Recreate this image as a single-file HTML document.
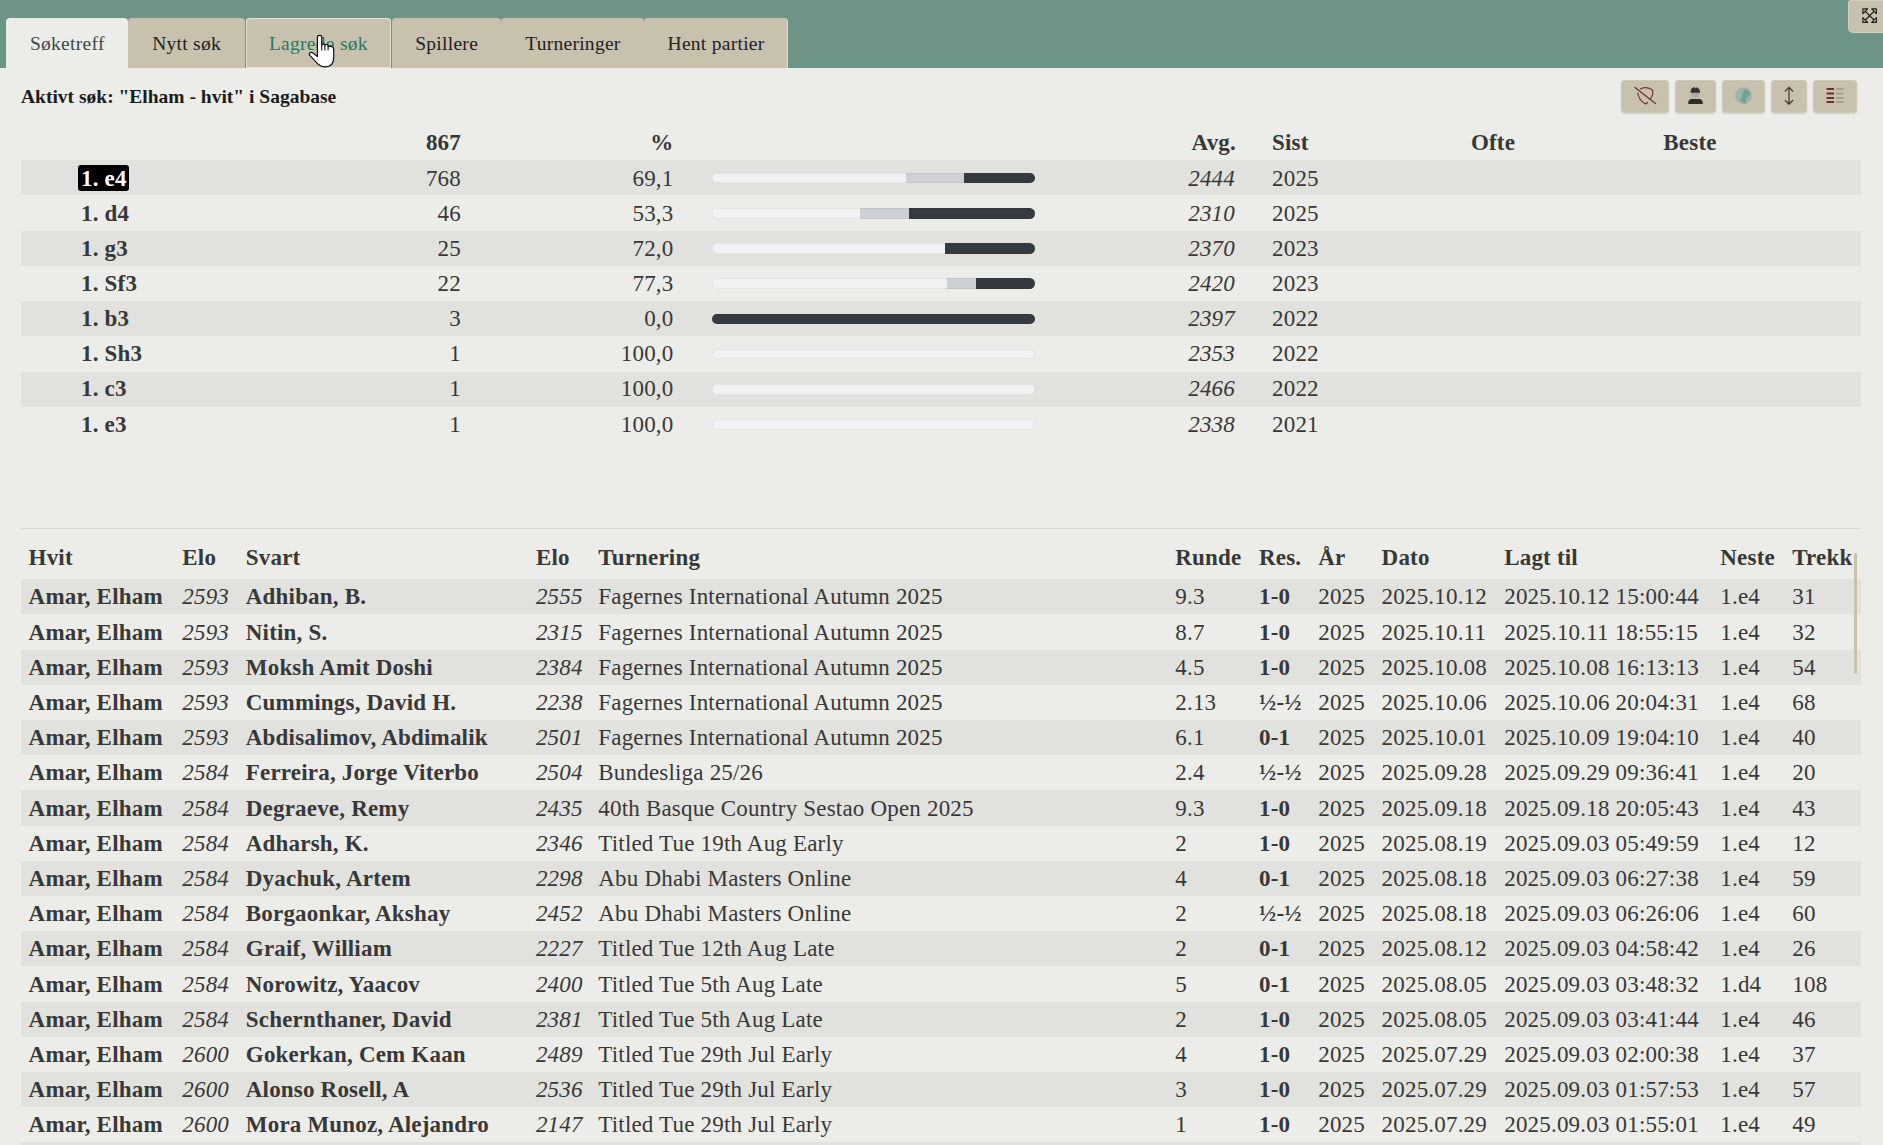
<!DOCTYPE html>
<html><head><meta charset="utf-8"><style>
html,body{margin:0;padding:0;}
body{width:1883px;height:1145px;overflow:hidden;position:relative;background:#ecece8;font-family:"Liberation Serif",serif;color:#383838;}
.t{position:absolute;white-space:nowrap;}
.ls{letter-spacing:0.19px;}
.r{position:absolute;}
.bar{border-radius:6px;box-shadow:inset 0 0 0 0.7px rgba(0,0,0,0.07);}
</style></head><body>
<div class="r" style="left:0px;top:0px;width:1883px;height:68px;background:#6e9487;"></div>
<div class="r" style="left:6px;top:18px;width:122px;height:50px;background:#ecece8;border-radius:4px 4px 0 0;"></div>
<div class="t" style="top:33.67px;left:-132.70px;width:400px;text-align:center;font-size:19.5px;line-height:19.5px;color:#3b4a4a;letter-spacing:0.28px;">Søketreff</div>
<div class="r" style="left:128px;top:18px;width:116.5px;height:50px;background:#c8c1ae;border-radius:4px 4px 0 0;"></div>
<div class="t" style="top:33.67px;left:-13.45px;width:400px;text-align:center;font-size:19.5px;line-height:19.5px;color:#222;letter-spacing:0.28px;">Nytt søk</div>
<div class="r" style="left:245.5px;top:18px;width:145.2px;height:50px;background:#c8c1ae;border-radius:4px 4px 0 0;box-shadow: inset 0 0 0 1px #e6e2d6;"></div>
<div class="t" style="top:33.67px;left:118.40px;width:400px;text-align:center;font-size:19.5px;line-height:19.5px;color:#2a7862;letter-spacing:0.28px;">Lagrede søk</div>
<div class="r" style="left:391.5px;top:18px;width:109.7px;height:50px;background:#c8c1ae;border-radius:4px 4px 0 0;"></div>
<div class="t" style="top:33.67px;left:246.65px;width:400px;text-align:center;font-size:19.5px;line-height:19.5px;color:#222;letter-spacing:0.28px;">Spillere</div>
<div class="r" style="left:501.2px;top:18px;width:142.8px;height:50px;background:#c8c1ae;border-radius:4px 4px 0 0;"></div>
<div class="t" style="top:33.67px;left:372.90px;width:400px;text-align:center;font-size:19.5px;line-height:19.5px;color:#222;letter-spacing:0.28px;">Turneringer</div>
<div class="r" style="left:644px;top:18px;width:143.5px;height:50px;background:#c8c1ae;border-radius:4px 4px 0 0;box-shadow: inset -1px 0 0 rgba(235,238,228,0.55);"></div>
<div class="t" style="top:33.67px;left:516.05px;width:400px;text-align:center;font-size:19.5px;line-height:19.5px;color:#222;letter-spacing:0.28px;">Hent partier</div>
<div class="r" style="left:1848px;top:0px;width:40px;height:33px;background:#c8c1ae;border-radius:3px 0 0 5px;box-shadow:inset 0 0 0 1px rgba(255,255,255,0.22);"></div>
<svg class="r" style="left:1855px;top:0px" width="28" height="30" viewBox="1855 0 28 30" fill="none" stroke="#1e1a18" stroke-width="1.15" stroke-linejoin="round">
<path d="M1862.9,8.9 H1867.6 L1862.9,13.6 Z M1876.4,8.9 H1871.7 L1876.4,13.6 Z M1862.9,22.4 H1867.6 L1862.9,17.7 Z M1876.4,22.4 H1871.7 L1876.4,17.7 Z"/>
<path d="M1865.3,11.3 L1874,20 M1874,11.3 L1865.3,20" stroke-width="1.15"/></svg>
<div class="t" style="top:86.77px;left:21.00px;font-size:19.5px;line-height:19.5px;font-weight:bold;color:#1c1c1c;">Aktivt søk: "Elham - hvit" i Sagabase</div>
<div class="r" style="left:1621px;top:80px;width:48px;height:33px;background:#c8c1ae;border-radius:4px;box-shadow:0 1px 2px rgba(0,0,0,0.12), inset 0 0 0 1px rgba(255,255,255,0.12);"></div>
<div class="r" style="left:1675px;top:80px;width:41px;height:33px;background:#c8c1ae;border-radius:4px;box-shadow:0 1px 2px rgba(0,0,0,0.12), inset 0 0 0 1px rgba(255,255,255,0.12);"></div>
<div class="r" style="left:1722px;top:80px;width:43px;height:33px;background:#c8c1ae;border-radius:4px;box-shadow:0 1px 2px rgba(0,0,0,0.12), inset 0 0 0 1px rgba(255,255,255,0.12);"></div>
<div class="r" style="left:1771px;top:80px;width:36px;height:33px;background:#c8c1ae;border-radius:4px;box-shadow:0 1px 2px rgba(0,0,0,0.12), inset 0 0 0 1px rgba(255,255,255,0.12);"></div>
<div class="r" style="left:1813px;top:80px;width:44px;height:33px;background:#c8c1ae;border-radius:4px;box-shadow:0 1px 2px rgba(0,0,0,0.12), inset 0 0 0 1px rgba(255,255,255,0.12);"></div>
<svg class="r" style="left:0;top:0" width="1883" height="130" viewBox="0 0 1883 130">
<path d="M1637.8,93 Q1640,89 1645,87.6 Q1650,87.6 1652.8,90.5 Q1653.5,98 1645.5,104 Q1638.5,100 1637.8,93 Z" fill="#d9b8ae" fill-opacity="0.55" stroke="none"/>
<path d="M1640.5,89 Q1642.5,87.6 1645,87.6 Q1650,87.6 1652.8,90.5 Q1653.3,95 1650.5,99 M1647.5,102.5 Q1646.5,103.5 1645.5,104 Q1638.5,100 1637.8,93" fill="none" stroke="#6e3a30" stroke-width="1.2" stroke-linecap="round"/>
<path d="M1635,87.5 L1655.5,103.5" stroke="#6e3a30" stroke-width="1.35" stroke-linecap="round"/>
<ellipse cx="1695.2" cy="94.4" rx="3.9" ry="3.3" fill="#aaaaae"/>
<path d="M1690.5,92.8 Q1690.5,88.6 1693,87.5 L1694.3,87 L1695.4,88.6 L1696.6,87.2 Q1700.1,88.4 1700.1,92.8 Z" fill="#3a302c"/>
<path d="M1688.1,104 L1688.6,101 Q1689.2,99 1691.5,99 L1699.5,99 Q1701.8,99 1702.4,101 L1702.9,104 Z" fill="#2e2c28"/>
<circle cx="1743.5" cy="95.6" r="8.3" fill="#9ab6ac"/>
<path d="M1744,89 Q1749,90 1751,94 L1747,97 Q1745,100 1746.5,103.5 Q1741,103 1740,99.5 Q1743,97 1742.5,94 Z" fill="#6f9f93" opacity="0.9"/>
<path d="M1789,88 L1789,103.5 M1785.3,91 L1789,87.3 L1792.7,91 M1785.3,100.5 L1789,104.2 L1792.7,100.5" fill="none" stroke="#4e3c30" stroke-width="1.25" stroke-linecap="round" stroke-linejoin="round"/>
<g stroke-width="2" stroke-linecap="butt">
<path d="M1826.6,89 H1834 M1826.6,93.4 H1834 M1826.6,97.9 H1834 M1826.6,102 H1834" stroke="#6e2f28"/>
<path d="M1836,89 H1843.6 M1836,93.4 H1843.6 M1836,97.9 H1843.6 M1836,102 H1843.6" stroke="#ab9d91"/>
</g>
</svg>
<div class="t ls" style="top:131.24px;left:61.00px;width:400px;text-align:right;font-size:23.0px;line-height:23.0px;font-weight:bold;">867</div>
<div class="t ls" style="top:131.24px;left:273.50px;width:400px;text-align:right;font-size:23.0px;line-height:23.0px;font-weight:bold;">%</div>
<div class="t ls" style="top:131.24px;left:836.00px;width:400px;text-align:right;font-size:23.0px;line-height:23.0px;font-weight:bold;">Avg.</div>
<div class="t ls" style="top:131.24px;left:1272.00px;font-size:23.0px;line-height:23.0px;font-weight:bold;">Sist</div>
<div class="t ls" style="top:131.24px;left:1293.00px;width:400px;text-align:center;font-size:23.0px;line-height:23.0px;font-weight:bold;">Ofte</div>
<div class="t ls" style="top:131.24px;left:1490.00px;width:400px;text-align:center;font-size:23.0px;line-height:23.0px;font-weight:bold;">Beste</div>
<div class="r" style="left:21px;top:160.0px;width:1839.5px;height:35.2px;background:#e1e1dd;"></div>
<div class="r" style="left:78px;top:165.0px;width:51px;height:25.5px;background:#000;border-radius:3px;"></div>
<div class="t ls" style="top:166.54px;left:81.00px;font-size:23.0px;line-height:23.0px;font-weight:bold;color:#fff;">1. e4</div>
<div class="t ls" style="top:166.54px;left:61.00px;width:400px;text-align:right;font-size:23.0px;line-height:23.0px;">768</div>
<div class="t ls" style="top:166.54px;left:273.50px;width:400px;text-align:right;font-size:23.0px;line-height:23.0px;">69,1</div>
<div class="t ls" style="top:166.54px;left:835.00px;width:400px;text-align:right;font-size:23.0px;line-height:23.0px;font-style:italic;">2444</div>
<div class="t ls" style="top:166.54px;left:1272.00px;font-size:23.0px;line-height:23.0px;">2025</div>
<div class="r bar" style="left:711.7px;top:172.80px;width:323.50px;height:10.5px;background:linear-gradient(to right,#f2f2f4 0,#f2f2f4 60.00%,#cdd1d6 60.00%,#cdd1d6 78.00%,#343a40 78.00%,#343a40 100%)"></div>
<div class="t ls" style="top:201.69px;left:81.00px;font-size:23.0px;line-height:23.0px;font-weight:bold;">1. d4</div>
<div class="t ls" style="top:201.69px;left:61.00px;width:400px;text-align:right;font-size:23.0px;line-height:23.0px;">46</div>
<div class="t ls" style="top:201.69px;left:273.50px;width:400px;text-align:right;font-size:23.0px;line-height:23.0px;">53,3</div>
<div class="t ls" style="top:201.69px;left:835.00px;width:400px;text-align:right;font-size:23.0px;line-height:23.0px;font-style:italic;">2310</div>
<div class="t ls" style="top:201.69px;left:1272.00px;font-size:23.0px;line-height:23.0px;">2025</div>
<div class="r bar" style="left:711.7px;top:208.00px;width:323.50px;height:10.5px;background:linear-gradient(to right,#f2f2f4 0,#f2f2f4 45.80%,#cdd1d6 45.80%,#cdd1d6 61.00%,#343a40 61.00%,#343a40 100%)"></div>
<div class="r" style="left:21px;top:230.5px;width:1839.5px;height:35.2px;background:#e1e1dd;"></div>
<div class="t ls" style="top:236.84px;left:81.00px;font-size:23.0px;line-height:23.0px;font-weight:bold;">1. g3</div>
<div class="t ls" style="top:236.84px;left:61.00px;width:400px;text-align:right;font-size:23.0px;line-height:23.0px;">25</div>
<div class="t ls" style="top:236.84px;left:273.50px;width:400px;text-align:right;font-size:23.0px;line-height:23.0px;">72,0</div>
<div class="t ls" style="top:236.84px;left:835.00px;width:400px;text-align:right;font-size:23.0px;line-height:23.0px;font-style:italic;">2370</div>
<div class="t ls" style="top:236.84px;left:1272.00px;font-size:23.0px;line-height:23.0px;">2023</div>
<div class="r bar" style="left:711.7px;top:243.20px;width:323.50px;height:10.5px;background:linear-gradient(to right,#f2f2f4 0,#f2f2f4 72.20%,#cdd1d6 72.20%,#cdd1d6 72.20%,#343a40 72.20%,#343a40 100%)"></div>
<div class="t ls" style="top:271.99px;left:81.00px;font-size:23.0px;line-height:23.0px;font-weight:bold;">1. Sf3</div>
<div class="t ls" style="top:271.99px;left:61.00px;width:400px;text-align:right;font-size:23.0px;line-height:23.0px;">22</div>
<div class="t ls" style="top:271.99px;left:273.50px;width:400px;text-align:right;font-size:23.0px;line-height:23.0px;">77,3</div>
<div class="t ls" style="top:271.99px;left:835.00px;width:400px;text-align:right;font-size:23.0px;line-height:23.0px;font-style:italic;">2420</div>
<div class="t ls" style="top:271.99px;left:1272.00px;font-size:23.0px;line-height:23.0px;">2023</div>
<div class="r bar" style="left:711.7px;top:278.40px;width:323.50px;height:10.5px;background:linear-gradient(to right,#f2f2f4 0,#f2f2f4 72.70%,#cdd1d6 72.70%,#cdd1d6 81.70%,#343a40 81.70%,#343a40 100%)"></div>
<div class="r" style="left:21px;top:301.0px;width:1839.5px;height:35.2px;background:#e1e1dd;"></div>
<div class="t ls" style="top:307.14px;left:81.00px;font-size:23.0px;line-height:23.0px;font-weight:bold;">1. b3</div>
<div class="t ls" style="top:307.14px;left:61.00px;width:400px;text-align:right;font-size:23.0px;line-height:23.0px;">3</div>
<div class="t ls" style="top:307.14px;left:273.50px;width:400px;text-align:right;font-size:23.0px;line-height:23.0px;">0,0</div>
<div class="t ls" style="top:307.14px;left:835.00px;width:400px;text-align:right;font-size:23.0px;line-height:23.0px;font-style:italic;">2397</div>
<div class="t ls" style="top:307.14px;left:1272.00px;font-size:23.0px;line-height:23.0px;">2022</div>
<div class="r bar" style="left:711.7px;top:313.60px;width:323.50px;height:10.5px;background:linear-gradient(to right,#f2f2f4 0,#f2f2f4 0.00%,#cdd1d6 0.00%,#cdd1d6 0.00%,#343a40 0.00%,#343a40 100%)"></div>
<div class="t ls" style="top:342.29px;left:81.00px;font-size:23.0px;line-height:23.0px;font-weight:bold;">1. Sh3</div>
<div class="t ls" style="top:342.29px;left:61.00px;width:400px;text-align:right;font-size:23.0px;line-height:23.0px;">1</div>
<div class="t ls" style="top:342.29px;left:273.50px;width:400px;text-align:right;font-size:23.0px;line-height:23.0px;">100,0</div>
<div class="t ls" style="top:342.29px;left:835.00px;width:400px;text-align:right;font-size:23.0px;line-height:23.0px;font-style:italic;">2353</div>
<div class="t ls" style="top:342.29px;left:1272.00px;font-size:23.0px;line-height:23.0px;">2022</div>
<div class="r bar" style="left:711.7px;top:348.80px;width:323.50px;height:10.5px;background:linear-gradient(to right,#f2f2f4 0,#f2f2f4 100.00%,#cdd1d6 100.00%,#cdd1d6 100.00%,#343a40 100.00%,#343a40 100%)"></div>
<div class="r" style="left:21px;top:371.5px;width:1839.5px;height:35.2px;background:#e1e1dd;"></div>
<div class="t ls" style="top:377.44px;left:81.00px;font-size:23.0px;line-height:23.0px;font-weight:bold;">1. c3</div>
<div class="t ls" style="top:377.44px;left:61.00px;width:400px;text-align:right;font-size:23.0px;line-height:23.0px;">1</div>
<div class="t ls" style="top:377.44px;left:273.50px;width:400px;text-align:right;font-size:23.0px;line-height:23.0px;">100,0</div>
<div class="t ls" style="top:377.44px;left:835.00px;width:400px;text-align:right;font-size:23.0px;line-height:23.0px;font-style:italic;">2466</div>
<div class="t ls" style="top:377.44px;left:1272.00px;font-size:23.0px;line-height:23.0px;">2022</div>
<div class="r bar" style="left:711.7px;top:384.00px;width:323.50px;height:10.5px;background:linear-gradient(to right,#f2f2f4 0,#f2f2f4 100.00%,#cdd1d6 100.00%,#cdd1d6 100.00%,#343a40 100.00%,#343a40 100%)"></div>
<div class="t ls" style="top:412.59px;left:81.00px;font-size:23.0px;line-height:23.0px;font-weight:bold;">1. e3</div>
<div class="t ls" style="top:412.59px;left:61.00px;width:400px;text-align:right;font-size:23.0px;line-height:23.0px;">1</div>
<div class="t ls" style="top:412.59px;left:273.50px;width:400px;text-align:right;font-size:23.0px;line-height:23.0px;">100,0</div>
<div class="t ls" style="top:412.59px;left:835.00px;width:400px;text-align:right;font-size:23.0px;line-height:23.0px;font-style:italic;">2338</div>
<div class="t ls" style="top:412.59px;left:1272.00px;font-size:23.0px;line-height:23.0px;">2021</div>
<div class="r bar" style="left:711.7px;top:419.20px;width:323.50px;height:10.5px;background:linear-gradient(to right,#f2f2f4 0,#f2f2f4 100.00%,#cdd1d6 100.00%,#cdd1d6 100.00%,#343a40 100.00%,#343a40 100%)"></div>
<div class="r" style="left:21px;top:527.5px;width:1839.5px;height:1px;background:#d6d6d2;"></div>
<div class="t ls" style="top:545.74px;left:28.60px;font-size:23.0px;line-height:23.0px;font-weight:bold;">Hvit</div>
<div class="t ls" style="top:545.74px;left:182.30px;font-size:23.0px;line-height:23.0px;font-weight:bold;">Elo</div>
<div class="t ls" style="top:545.74px;left:245.80px;font-size:23.0px;line-height:23.0px;font-weight:bold;">Svart</div>
<div class="t ls" style="top:545.74px;left:535.90px;font-size:23.0px;line-height:23.0px;font-weight:bold;">Elo</div>
<div class="t ls" style="top:545.74px;left:598.30px;font-size:23.0px;line-height:23.0px;font-weight:bold;">Turnering</div>
<div class="t ls" style="top:545.74px;left:1175.30px;font-size:23.0px;line-height:23.0px;font-weight:bold;">Runde</div>
<div class="t ls" style="top:545.74px;left:1259.00px;font-size:23.0px;line-height:23.0px;font-weight:bold;">Res.</div>
<div class="t ls" style="top:545.74px;left:1318.20px;font-size:23.0px;line-height:23.0px;font-weight:bold;">År</div>
<div class="t ls" style="top:545.74px;left:1381.60px;font-size:23.0px;line-height:23.0px;font-weight:bold;">Dato</div>
<div class="t ls" style="top:545.74px;left:1504.20px;font-size:23.0px;line-height:23.0px;font-weight:bold;">Lagt til</div>
<div class="t ls" style="top:545.74px;left:1720.30px;font-size:23.0px;line-height:23.0px;font-weight:bold;">Neste</div>
<div class="t ls" style="top:545.74px;left:1792.30px;font-size:23.0px;line-height:23.0px;font-weight:bold;">Trekk</div>
<div class="r" style="left:21px;top:579.3px;width:1839.5px;height:35.2px;background:#e1e1dd;"></div>
<div class="t ls" style="top:584.54px;left:28.60px;font-size:23.0px;line-height:23.0px;font-weight:bold;">Amar, Elham</div>
<div class="t ls" style="top:584.54px;left:182.30px;font-size:23.0px;line-height:23.0px;font-style:italic;">2593</div>
<div class="t ls" style="top:584.54px;left:245.80px;font-size:23.0px;line-height:23.0px;font-weight:bold;">Adhiban, B.</div>
<div class="t ls" style="top:584.54px;left:535.90px;font-size:23.0px;line-height:23.0px;font-style:italic;">2555</div>
<div class="t ls" style="top:584.54px;left:598.30px;font-size:23.0px;line-height:23.0px;">Fagernes International Autumn 2025</div>
<div class="t ls" style="top:584.54px;left:1175.30px;font-size:23.0px;line-height:23.0px;">9.3</div>
<div class="t ls" style="top:584.54px;left:1259.00px;font-size:23.0px;line-height:23.0px;font-weight:bold;">1-0</div>
<div class="t ls" style="top:584.54px;left:1318.20px;font-size:23.0px;line-height:23.0px;">2025</div>
<div class="t ls" style="top:584.54px;left:1381.60px;font-size:23.0px;line-height:23.0px;">2025.10.12</div>
<div class="t ls" style="top:584.54px;left:1504.20px;font-size:23.0px;line-height:23.0px;">2025.10.12 15:00:44</div>
<div class="t ls" style="top:584.54px;left:1720.30px;font-size:23.0px;line-height:23.0px;">1.e4</div>
<div class="t ls" style="top:584.54px;left:1792.30px;font-size:23.0px;line-height:23.0px;">31</div>
<div class="t ls" style="top:620.69px;left:28.60px;font-size:23.0px;line-height:23.0px;font-weight:bold;">Amar, Elham</div>
<div class="t ls" style="top:620.69px;left:182.30px;font-size:23.0px;line-height:23.0px;font-style:italic;">2593</div>
<div class="t ls" style="top:620.69px;left:245.80px;font-size:23.0px;line-height:23.0px;font-weight:bold;">Nitin, S.</div>
<div class="t ls" style="top:620.69px;left:535.90px;font-size:23.0px;line-height:23.0px;font-style:italic;">2315</div>
<div class="t ls" style="top:620.69px;left:598.30px;font-size:23.0px;line-height:23.0px;">Fagernes International Autumn 2025</div>
<div class="t ls" style="top:620.69px;left:1175.30px;font-size:23.0px;line-height:23.0px;">8.7</div>
<div class="t ls" style="top:620.69px;left:1259.00px;font-size:23.0px;line-height:23.0px;font-weight:bold;">1-0</div>
<div class="t ls" style="top:620.69px;left:1318.20px;font-size:23.0px;line-height:23.0px;">2025</div>
<div class="t ls" style="top:620.69px;left:1381.60px;font-size:23.0px;line-height:23.0px;">2025.10.11</div>
<div class="t ls" style="top:620.69px;left:1504.20px;font-size:23.0px;line-height:23.0px;">2025.10.11 18:55:15</div>
<div class="t ls" style="top:620.69px;left:1720.30px;font-size:23.0px;line-height:23.0px;">1.e4</div>
<div class="t ls" style="top:620.69px;left:1792.30px;font-size:23.0px;line-height:23.0px;">32</div>
<div class="r" style="left:21px;top:649.68px;width:1839.5px;height:35.2px;background:#e1e1dd;"></div>
<div class="t ls" style="top:655.89px;left:28.60px;font-size:23.0px;line-height:23.0px;font-weight:bold;">Amar, Elham</div>
<div class="t ls" style="top:655.89px;left:182.30px;font-size:23.0px;line-height:23.0px;font-style:italic;">2593</div>
<div class="t ls" style="top:655.89px;left:245.80px;font-size:23.0px;line-height:23.0px;font-weight:bold;">Moksh Amit Doshi</div>
<div class="t ls" style="top:655.89px;left:535.90px;font-size:23.0px;line-height:23.0px;font-style:italic;">2384</div>
<div class="t ls" style="top:655.89px;left:598.30px;font-size:23.0px;line-height:23.0px;">Fagernes International Autumn 2025</div>
<div class="t ls" style="top:655.89px;left:1175.30px;font-size:23.0px;line-height:23.0px;">4.5</div>
<div class="t ls" style="top:655.89px;left:1259.00px;font-size:23.0px;line-height:23.0px;font-weight:bold;">1-0</div>
<div class="t ls" style="top:655.89px;left:1318.20px;font-size:23.0px;line-height:23.0px;">2025</div>
<div class="t ls" style="top:655.89px;left:1381.60px;font-size:23.0px;line-height:23.0px;">2025.10.08</div>
<div class="t ls" style="top:655.89px;left:1504.20px;font-size:23.0px;line-height:23.0px;">2025.10.08 16:13:13</div>
<div class="t ls" style="top:655.89px;left:1720.30px;font-size:23.0px;line-height:23.0px;">1.e4</div>
<div class="t ls" style="top:655.89px;left:1792.30px;font-size:23.0px;line-height:23.0px;">54</div>
<div class="t ls" style="top:691.09px;left:28.60px;font-size:23.0px;line-height:23.0px;font-weight:bold;">Amar, Elham</div>
<div class="t ls" style="top:691.09px;left:182.30px;font-size:23.0px;line-height:23.0px;font-style:italic;">2593</div>
<div class="t ls" style="top:691.09px;left:245.80px;font-size:23.0px;line-height:23.0px;font-weight:bold;">Cummings, David H.</div>
<div class="t ls" style="top:691.09px;left:535.90px;font-size:23.0px;line-height:23.0px;font-style:italic;">2238</div>
<div class="t ls" style="top:691.09px;left:598.30px;font-size:23.0px;line-height:23.0px;">Fagernes International Autumn 2025</div>
<div class="t ls" style="top:691.09px;left:1175.30px;font-size:23.0px;line-height:23.0px;">2.13</div>
<div class="t ls" style="top:691.09px;left:1259.00px;font-size:23.0px;line-height:23.0px;font-weight:bold;">½-½</div>
<div class="t ls" style="top:691.09px;left:1318.20px;font-size:23.0px;line-height:23.0px;">2025</div>
<div class="t ls" style="top:691.09px;left:1381.60px;font-size:23.0px;line-height:23.0px;">2025.10.06</div>
<div class="t ls" style="top:691.09px;left:1504.20px;font-size:23.0px;line-height:23.0px;">2025.10.06 20:04:31</div>
<div class="t ls" style="top:691.09px;left:1720.30px;font-size:23.0px;line-height:23.0px;">1.e4</div>
<div class="t ls" style="top:691.09px;left:1792.30px;font-size:23.0px;line-height:23.0px;">68</div>
<div class="r" style="left:21px;top:720.06px;width:1839.5px;height:35.2px;background:#e1e1dd;"></div>
<div class="t ls" style="top:726.29px;left:28.60px;font-size:23.0px;line-height:23.0px;font-weight:bold;">Amar, Elham</div>
<div class="t ls" style="top:726.29px;left:182.30px;font-size:23.0px;line-height:23.0px;font-style:italic;">2593</div>
<div class="t ls" style="top:726.29px;left:245.80px;font-size:23.0px;line-height:23.0px;font-weight:bold;">Abdisalimov, Abdimalik</div>
<div class="t ls" style="top:726.29px;left:535.90px;font-size:23.0px;line-height:23.0px;font-style:italic;">2501</div>
<div class="t ls" style="top:726.29px;left:598.30px;font-size:23.0px;line-height:23.0px;">Fagernes International Autumn 2025</div>
<div class="t ls" style="top:726.29px;left:1175.30px;font-size:23.0px;line-height:23.0px;">6.1</div>
<div class="t ls" style="top:726.29px;left:1259.00px;font-size:23.0px;line-height:23.0px;font-weight:bold;">0-1</div>
<div class="t ls" style="top:726.29px;left:1318.20px;font-size:23.0px;line-height:23.0px;">2025</div>
<div class="t ls" style="top:726.29px;left:1381.60px;font-size:23.0px;line-height:23.0px;">2025.10.01</div>
<div class="t ls" style="top:726.29px;left:1504.20px;font-size:23.0px;line-height:23.0px;">2025.10.09 19:04:10</div>
<div class="t ls" style="top:726.29px;left:1720.30px;font-size:23.0px;line-height:23.0px;">1.e4</div>
<div class="t ls" style="top:726.29px;left:1792.30px;font-size:23.0px;line-height:23.0px;">40</div>
<div class="t ls" style="top:761.49px;left:28.60px;font-size:23.0px;line-height:23.0px;font-weight:bold;">Amar, Elham</div>
<div class="t ls" style="top:761.49px;left:182.30px;font-size:23.0px;line-height:23.0px;font-style:italic;">2584</div>
<div class="t ls" style="top:761.49px;left:245.80px;font-size:23.0px;line-height:23.0px;font-weight:bold;">Ferreira, Jorge Viterbo</div>
<div class="t ls" style="top:761.49px;left:535.90px;font-size:23.0px;line-height:23.0px;font-style:italic;">2504</div>
<div class="t ls" style="top:761.49px;left:598.30px;font-size:23.0px;line-height:23.0px;">Bundesliga 25/26</div>
<div class="t ls" style="top:761.49px;left:1175.30px;font-size:23.0px;line-height:23.0px;">2.4</div>
<div class="t ls" style="top:761.49px;left:1259.00px;font-size:23.0px;line-height:23.0px;font-weight:bold;">½-½</div>
<div class="t ls" style="top:761.49px;left:1318.20px;font-size:23.0px;line-height:23.0px;">2025</div>
<div class="t ls" style="top:761.49px;left:1381.60px;font-size:23.0px;line-height:23.0px;">2025.09.28</div>
<div class="t ls" style="top:761.49px;left:1504.20px;font-size:23.0px;line-height:23.0px;">2025.09.29 09:36:41</div>
<div class="t ls" style="top:761.49px;left:1720.30px;font-size:23.0px;line-height:23.0px;">1.e4</div>
<div class="t ls" style="top:761.49px;left:1792.30px;font-size:23.0px;line-height:23.0px;">20</div>
<div class="r" style="left:21px;top:790.44px;width:1839.5px;height:35.2px;background:#e1e1dd;"></div>
<div class="t ls" style="top:796.69px;left:28.60px;font-size:23.0px;line-height:23.0px;font-weight:bold;">Amar, Elham</div>
<div class="t ls" style="top:796.69px;left:182.30px;font-size:23.0px;line-height:23.0px;font-style:italic;">2584</div>
<div class="t ls" style="top:796.69px;left:245.80px;font-size:23.0px;line-height:23.0px;font-weight:bold;">Degraeve, Remy</div>
<div class="t ls" style="top:796.69px;left:535.90px;font-size:23.0px;line-height:23.0px;font-style:italic;">2435</div>
<div class="t ls" style="top:796.69px;left:598.30px;font-size:23.0px;line-height:23.0px;">40th Basque Country Sestao Open 2025</div>
<div class="t ls" style="top:796.69px;left:1175.30px;font-size:23.0px;line-height:23.0px;">9.3</div>
<div class="t ls" style="top:796.69px;left:1259.00px;font-size:23.0px;line-height:23.0px;font-weight:bold;">1-0</div>
<div class="t ls" style="top:796.69px;left:1318.20px;font-size:23.0px;line-height:23.0px;">2025</div>
<div class="t ls" style="top:796.69px;left:1381.60px;font-size:23.0px;line-height:23.0px;">2025.09.18</div>
<div class="t ls" style="top:796.69px;left:1504.20px;font-size:23.0px;line-height:23.0px;">2025.09.18 20:05:43</div>
<div class="t ls" style="top:796.69px;left:1720.30px;font-size:23.0px;line-height:23.0px;">1.e4</div>
<div class="t ls" style="top:796.69px;left:1792.30px;font-size:23.0px;line-height:23.0px;">43</div>
<div class="t ls" style="top:831.89px;left:28.60px;font-size:23.0px;line-height:23.0px;font-weight:bold;">Amar, Elham</div>
<div class="t ls" style="top:831.89px;left:182.30px;font-size:23.0px;line-height:23.0px;font-style:italic;">2584</div>
<div class="t ls" style="top:831.89px;left:245.80px;font-size:23.0px;line-height:23.0px;font-weight:bold;">Adharsh, K.</div>
<div class="t ls" style="top:831.89px;left:535.90px;font-size:23.0px;line-height:23.0px;font-style:italic;">2346</div>
<div class="t ls" style="top:831.89px;left:598.30px;font-size:23.0px;line-height:23.0px;">Titled Tue 19th Aug Early</div>
<div class="t ls" style="top:831.89px;left:1175.30px;font-size:23.0px;line-height:23.0px;">2</div>
<div class="t ls" style="top:831.89px;left:1259.00px;font-size:23.0px;line-height:23.0px;font-weight:bold;">1-0</div>
<div class="t ls" style="top:831.89px;left:1318.20px;font-size:23.0px;line-height:23.0px;">2025</div>
<div class="t ls" style="top:831.89px;left:1381.60px;font-size:23.0px;line-height:23.0px;">2025.08.19</div>
<div class="t ls" style="top:831.89px;left:1504.20px;font-size:23.0px;line-height:23.0px;">2025.09.03 05:49:59</div>
<div class="t ls" style="top:831.89px;left:1720.30px;font-size:23.0px;line-height:23.0px;">1.e4</div>
<div class="t ls" style="top:831.89px;left:1792.30px;font-size:23.0px;line-height:23.0px;">12</div>
<div class="r" style="left:21px;top:860.82px;width:1839.5px;height:35.2px;background:#e1e1dd;"></div>
<div class="t ls" style="top:867.09px;left:28.60px;font-size:23.0px;line-height:23.0px;font-weight:bold;">Amar, Elham</div>
<div class="t ls" style="top:867.09px;left:182.30px;font-size:23.0px;line-height:23.0px;font-style:italic;">2584</div>
<div class="t ls" style="top:867.09px;left:245.80px;font-size:23.0px;line-height:23.0px;font-weight:bold;">Dyachuk, Artem</div>
<div class="t ls" style="top:867.09px;left:535.90px;font-size:23.0px;line-height:23.0px;font-style:italic;">2298</div>
<div class="t ls" style="top:867.09px;left:598.30px;font-size:23.0px;line-height:23.0px;">Abu Dhabi Masters Online</div>
<div class="t ls" style="top:867.09px;left:1175.30px;font-size:23.0px;line-height:23.0px;">4</div>
<div class="t ls" style="top:867.09px;left:1259.00px;font-size:23.0px;line-height:23.0px;font-weight:bold;">0-1</div>
<div class="t ls" style="top:867.09px;left:1318.20px;font-size:23.0px;line-height:23.0px;">2025</div>
<div class="t ls" style="top:867.09px;left:1381.60px;font-size:23.0px;line-height:23.0px;">2025.08.18</div>
<div class="t ls" style="top:867.09px;left:1504.20px;font-size:23.0px;line-height:23.0px;">2025.09.03 06:27:38</div>
<div class="t ls" style="top:867.09px;left:1720.30px;font-size:23.0px;line-height:23.0px;">1.e4</div>
<div class="t ls" style="top:867.09px;left:1792.30px;font-size:23.0px;line-height:23.0px;">59</div>
<div class="t ls" style="top:902.29px;left:28.60px;font-size:23.0px;line-height:23.0px;font-weight:bold;">Amar, Elham</div>
<div class="t ls" style="top:902.29px;left:182.30px;font-size:23.0px;line-height:23.0px;font-style:italic;">2584</div>
<div class="t ls" style="top:902.29px;left:245.80px;font-size:23.0px;line-height:23.0px;font-weight:bold;">Borgaonkar, Akshay</div>
<div class="t ls" style="top:902.29px;left:535.90px;font-size:23.0px;line-height:23.0px;font-style:italic;">2452</div>
<div class="t ls" style="top:902.29px;left:598.30px;font-size:23.0px;line-height:23.0px;">Abu Dhabi Masters Online</div>
<div class="t ls" style="top:902.29px;left:1175.30px;font-size:23.0px;line-height:23.0px;">2</div>
<div class="t ls" style="top:902.29px;left:1259.00px;font-size:23.0px;line-height:23.0px;font-weight:bold;">½-½</div>
<div class="t ls" style="top:902.29px;left:1318.20px;font-size:23.0px;line-height:23.0px;">2025</div>
<div class="t ls" style="top:902.29px;left:1381.60px;font-size:23.0px;line-height:23.0px;">2025.08.18</div>
<div class="t ls" style="top:902.29px;left:1504.20px;font-size:23.0px;line-height:23.0px;">2025.09.03 06:26:06</div>
<div class="t ls" style="top:902.29px;left:1720.30px;font-size:23.0px;line-height:23.0px;">1.e4</div>
<div class="t ls" style="top:902.29px;left:1792.30px;font-size:23.0px;line-height:23.0px;">60</div>
<div class="r" style="left:21px;top:931.2px;width:1839.5px;height:35.2px;background:#e1e1dd;"></div>
<div class="t ls" style="top:937.49px;left:28.60px;font-size:23.0px;line-height:23.0px;font-weight:bold;">Amar, Elham</div>
<div class="t ls" style="top:937.49px;left:182.30px;font-size:23.0px;line-height:23.0px;font-style:italic;">2584</div>
<div class="t ls" style="top:937.49px;left:245.80px;font-size:23.0px;line-height:23.0px;font-weight:bold;">Graif, William</div>
<div class="t ls" style="top:937.49px;left:535.90px;font-size:23.0px;line-height:23.0px;font-style:italic;">2227</div>
<div class="t ls" style="top:937.49px;left:598.30px;font-size:23.0px;line-height:23.0px;">Titled Tue 12th Aug Late</div>
<div class="t ls" style="top:937.49px;left:1175.30px;font-size:23.0px;line-height:23.0px;">2</div>
<div class="t ls" style="top:937.49px;left:1259.00px;font-size:23.0px;line-height:23.0px;font-weight:bold;">0-1</div>
<div class="t ls" style="top:937.49px;left:1318.20px;font-size:23.0px;line-height:23.0px;">2025</div>
<div class="t ls" style="top:937.49px;left:1381.60px;font-size:23.0px;line-height:23.0px;">2025.08.12</div>
<div class="t ls" style="top:937.49px;left:1504.20px;font-size:23.0px;line-height:23.0px;">2025.09.03 04:58:42</div>
<div class="t ls" style="top:937.49px;left:1720.30px;font-size:23.0px;line-height:23.0px;">1.e4</div>
<div class="t ls" style="top:937.49px;left:1792.30px;font-size:23.0px;line-height:23.0px;">26</div>
<div class="t ls" style="top:972.69px;left:28.60px;font-size:23.0px;line-height:23.0px;font-weight:bold;">Amar, Elham</div>
<div class="t ls" style="top:972.69px;left:182.30px;font-size:23.0px;line-height:23.0px;font-style:italic;">2584</div>
<div class="t ls" style="top:972.69px;left:245.80px;font-size:23.0px;line-height:23.0px;font-weight:bold;">Norowitz, Yaacov</div>
<div class="t ls" style="top:972.69px;left:535.90px;font-size:23.0px;line-height:23.0px;font-style:italic;">2400</div>
<div class="t ls" style="top:972.69px;left:598.30px;font-size:23.0px;line-height:23.0px;">Titled Tue 5th Aug Late</div>
<div class="t ls" style="top:972.69px;left:1175.30px;font-size:23.0px;line-height:23.0px;">5</div>
<div class="t ls" style="top:972.69px;left:1259.00px;font-size:23.0px;line-height:23.0px;font-weight:bold;">0-1</div>
<div class="t ls" style="top:972.69px;left:1318.20px;font-size:23.0px;line-height:23.0px;">2025</div>
<div class="t ls" style="top:972.69px;left:1381.60px;font-size:23.0px;line-height:23.0px;">2025.08.05</div>
<div class="t ls" style="top:972.69px;left:1504.20px;font-size:23.0px;line-height:23.0px;">2025.09.03 03:48:32</div>
<div class="t ls" style="top:972.69px;left:1720.30px;font-size:23.0px;line-height:23.0px;">1.d4</div>
<div class="t ls" style="top:972.69px;left:1792.30px;font-size:23.0px;line-height:23.0px;">108</div>
<div class="r" style="left:21px;top:1001.58px;width:1839.5px;height:35.2px;background:#e1e1dd;"></div>
<div class="t ls" style="top:1007.89px;left:28.60px;font-size:23.0px;line-height:23.0px;font-weight:bold;">Amar, Elham</div>
<div class="t ls" style="top:1007.89px;left:182.30px;font-size:23.0px;line-height:23.0px;font-style:italic;">2584</div>
<div class="t ls" style="top:1007.89px;left:245.80px;font-size:23.0px;line-height:23.0px;font-weight:bold;">Schernthaner, David</div>
<div class="t ls" style="top:1007.89px;left:535.90px;font-size:23.0px;line-height:23.0px;font-style:italic;">2381</div>
<div class="t ls" style="top:1007.89px;left:598.30px;font-size:23.0px;line-height:23.0px;">Titled Tue 5th Aug Late</div>
<div class="t ls" style="top:1007.89px;left:1175.30px;font-size:23.0px;line-height:23.0px;">2</div>
<div class="t ls" style="top:1007.89px;left:1259.00px;font-size:23.0px;line-height:23.0px;font-weight:bold;">1-0</div>
<div class="t ls" style="top:1007.89px;left:1318.20px;font-size:23.0px;line-height:23.0px;">2025</div>
<div class="t ls" style="top:1007.89px;left:1381.60px;font-size:23.0px;line-height:23.0px;">2025.08.05</div>
<div class="t ls" style="top:1007.89px;left:1504.20px;font-size:23.0px;line-height:23.0px;">2025.09.03 03:41:44</div>
<div class="t ls" style="top:1007.89px;left:1720.30px;font-size:23.0px;line-height:23.0px;">1.e4</div>
<div class="t ls" style="top:1007.89px;left:1792.30px;font-size:23.0px;line-height:23.0px;">46</div>
<div class="t ls" style="top:1043.09px;left:28.60px;font-size:23.0px;line-height:23.0px;font-weight:bold;">Amar, Elham</div>
<div class="t ls" style="top:1043.09px;left:182.30px;font-size:23.0px;line-height:23.0px;font-style:italic;">2600</div>
<div class="t ls" style="top:1043.09px;left:245.80px;font-size:23.0px;line-height:23.0px;font-weight:bold;">Gokerkan, Cem Kaan</div>
<div class="t ls" style="top:1043.09px;left:535.90px;font-size:23.0px;line-height:23.0px;font-style:italic;">2489</div>
<div class="t ls" style="top:1043.09px;left:598.30px;font-size:23.0px;line-height:23.0px;">Titled Tue 29th Jul Early</div>
<div class="t ls" style="top:1043.09px;left:1175.30px;font-size:23.0px;line-height:23.0px;">4</div>
<div class="t ls" style="top:1043.09px;left:1259.00px;font-size:23.0px;line-height:23.0px;font-weight:bold;">1-0</div>
<div class="t ls" style="top:1043.09px;left:1318.20px;font-size:23.0px;line-height:23.0px;">2025</div>
<div class="t ls" style="top:1043.09px;left:1381.60px;font-size:23.0px;line-height:23.0px;">2025.07.29</div>
<div class="t ls" style="top:1043.09px;left:1504.20px;font-size:23.0px;line-height:23.0px;">2025.09.03 02:00:38</div>
<div class="t ls" style="top:1043.09px;left:1720.30px;font-size:23.0px;line-height:23.0px;">1.e4</div>
<div class="t ls" style="top:1043.09px;left:1792.30px;font-size:23.0px;line-height:23.0px;">37</div>
<div class="r" style="left:21px;top:1071.96px;width:1839.5px;height:35.2px;background:#e1e1dd;"></div>
<div class="t ls" style="top:1078.29px;left:28.60px;font-size:23.0px;line-height:23.0px;font-weight:bold;">Amar, Elham</div>
<div class="t ls" style="top:1078.29px;left:182.30px;font-size:23.0px;line-height:23.0px;font-style:italic;">2600</div>
<div class="t ls" style="top:1078.29px;left:245.80px;font-size:23.0px;line-height:23.0px;font-weight:bold;">Alonso Rosell, A</div>
<div class="t ls" style="top:1078.29px;left:535.90px;font-size:23.0px;line-height:23.0px;font-style:italic;">2536</div>
<div class="t ls" style="top:1078.29px;left:598.30px;font-size:23.0px;line-height:23.0px;">Titled Tue 29th Jul Early</div>
<div class="t ls" style="top:1078.29px;left:1175.30px;font-size:23.0px;line-height:23.0px;">3</div>
<div class="t ls" style="top:1078.29px;left:1259.00px;font-size:23.0px;line-height:23.0px;font-weight:bold;">1-0</div>
<div class="t ls" style="top:1078.29px;left:1318.20px;font-size:23.0px;line-height:23.0px;">2025</div>
<div class="t ls" style="top:1078.29px;left:1381.60px;font-size:23.0px;line-height:23.0px;">2025.07.29</div>
<div class="t ls" style="top:1078.29px;left:1504.20px;font-size:23.0px;line-height:23.0px;">2025.09.03 01:57:53</div>
<div class="t ls" style="top:1078.29px;left:1720.30px;font-size:23.0px;line-height:23.0px;">1.e4</div>
<div class="t ls" style="top:1078.29px;left:1792.30px;font-size:23.0px;line-height:23.0px;">57</div>
<div class="t ls" style="top:1113.49px;left:28.60px;font-size:23.0px;line-height:23.0px;font-weight:bold;">Amar, Elham</div>
<div class="t ls" style="top:1113.49px;left:182.30px;font-size:23.0px;line-height:23.0px;font-style:italic;">2600</div>
<div class="t ls" style="top:1113.49px;left:245.80px;font-size:23.0px;line-height:23.0px;font-weight:bold;">Mora Munoz, Alejandro</div>
<div class="t ls" style="top:1113.49px;left:535.90px;font-size:23.0px;line-height:23.0px;font-style:italic;">2147</div>
<div class="t ls" style="top:1113.49px;left:598.30px;font-size:23.0px;line-height:23.0px;">Titled Tue 29th Jul Early</div>
<div class="t ls" style="top:1113.49px;left:1175.30px;font-size:23.0px;line-height:23.0px;">1</div>
<div class="t ls" style="top:1113.49px;left:1259.00px;font-size:23.0px;line-height:23.0px;font-weight:bold;">1-0</div>
<div class="t ls" style="top:1113.49px;left:1318.20px;font-size:23.0px;line-height:23.0px;">2025</div>
<div class="t ls" style="top:1113.49px;left:1381.60px;font-size:23.0px;line-height:23.0px;">2025.07.29</div>
<div class="t ls" style="top:1113.49px;left:1504.20px;font-size:23.0px;line-height:23.0px;">2025.09.03 01:55:01</div>
<div class="t ls" style="top:1113.49px;left:1720.30px;font-size:23.0px;line-height:23.0px;">1.e4</div>
<div class="t ls" style="top:1113.49px;left:1792.30px;font-size:23.0px;line-height:23.0px;">49</div>
<svg class="r" style="left:305px;top:33px;z-index:10" width="32" height="36" viewBox="0 0 32 36">
<path d="M12.4,4.2 Q12.4,2.4 14.55,2.4 Q16.7,2.4 16.7,4.2 L16.7,12.6 Q16.7,10.9 18.3,10.9 Q19.9,10.9 19.9,12.6 Q19.9,11.4 21.5,11.4 Q23.1,11.4 23.1,13.2 Q23.4,13.4 25.6,13.4 Q28.7,13.4 28.7,16.2 L28.7,24.5 Q28.7,33.8 20.2,33.8 Q15.2,33.8 11.6,29.6 L4.8,22.3 Q3.6,20.8 5,19.8 Q6.6,18.7 8.4,20.3 L12.4,23.6 Z" fill="#fff" stroke="#111" stroke-width="1.2" stroke-linejoin="round"/>
<path d="M16.7,12.6 V17.5 M19.9,12.6 V17.5 M23.1,13.2 V17.5" stroke="#111" stroke-width="1.1"/>
</svg>
<div class="r" style="left:21px;top:1142.4px;width:1839.5px;height:10px;background:#e1e1dd;"></div>
<div class="r" style="left:1853.5px;top:553px;width:3px;height:121px;background:#c9c2b0;border-radius:2px;"></div>
</body></html>
